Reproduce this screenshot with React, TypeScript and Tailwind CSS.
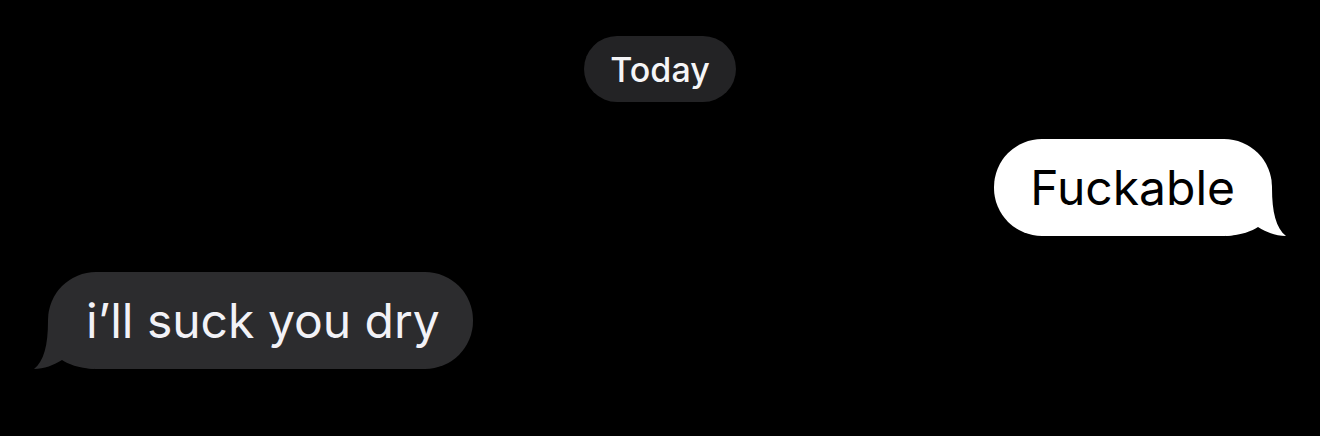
const font = { fontFamily: 'Inter, "Noto Sans", sans-serif' };

const TailRight = () => (
  <svg
    className="absolute bottom-0 right-[-14px]"
    width="60"
    height="48"
    viewBox="0 0 60 48"
  >
    <path d="M0 0 H46 C46 24 50 40 60 48 C50 48 40 44 32 39 C26 43 16 47 0 48 Z" fill="#ffffff" />
  </svg>
);

const TailLeft = () => (
  <svg
    className="absolute bottom-0 left-[-14px]"
    width="60"
    height="48"
    viewBox="0 0 60 48"
  >
    <path d="M60 0 H14 C14 24 10 40 0 48 C10 48 20 44 28 39 C34 43 44 47 60 48 Z" fill="#2c2c2e" />
  </svg>
);

export default function App() {
  return (
    <div className="w-[1320px] h-[436px] bg-black overflow-hidden" style={font}>
      <div className="flex flex-col px-12 pt-9">
        <div className="flex justify-center">
          <div className="h-[66px] px-[26px] rounded-full bg-[#232325] flex items-center text-[34px] font-medium text-[#f5f5f7]">
            Today
          </div>
        </div>

        <div className="flex justify-end mt-[37px]">
          <div className="relative h-[97px] pl-[36px] pr-[37px] rounded-[48px] bg-white flex items-center text-[48px] text-black">
            <TailRight />
            <span className="relative">Fuckable</span>
          </div>
        </div>

        <div className="flex justify-start mt-[36px]">
          <div className="relative h-[97px] pl-[38px] pr-[33px] rounded-[48px] bg-[#2c2c2e] flex items-center text-[48px] text-[#f2f2f7]">
            <TailLeft />
            <span className="relative">i’ll suck you dry</span>
          </div>
        </div>
      </div>
    </div>
  );
}
